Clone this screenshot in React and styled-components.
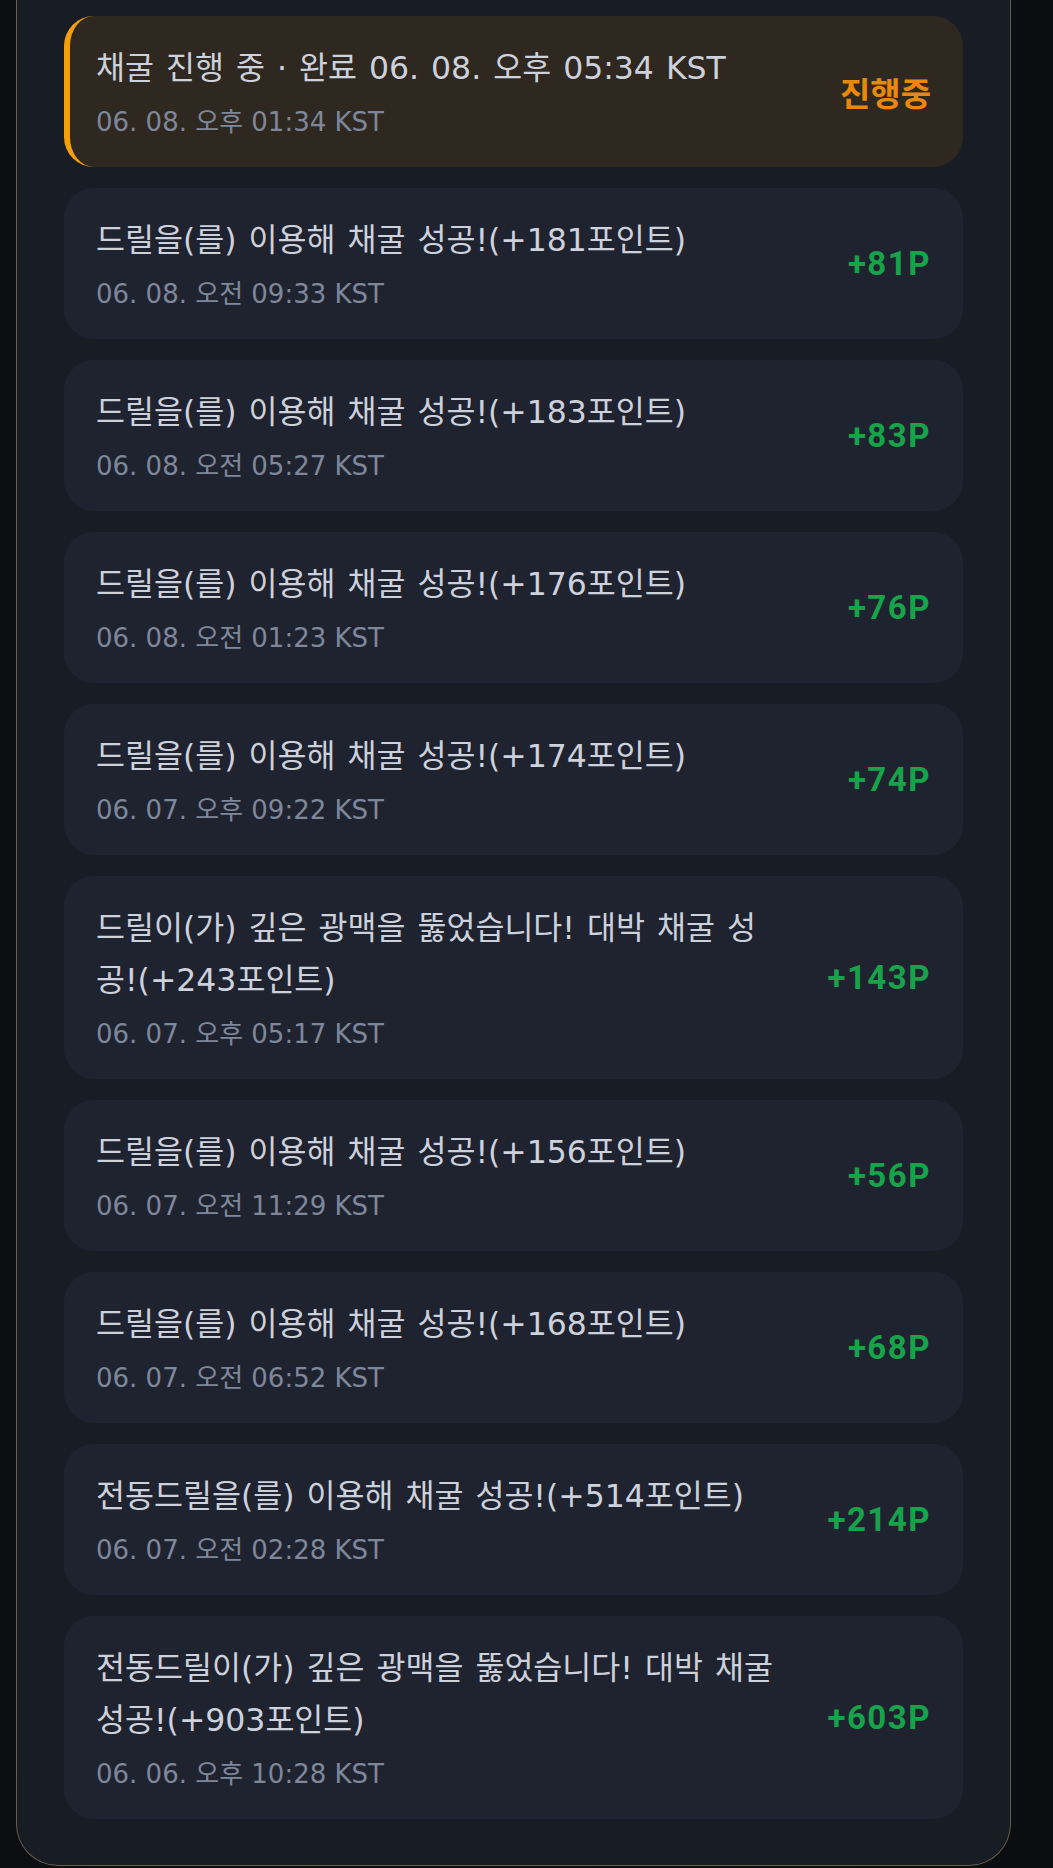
import React from 'react';
import styled, { createGlobalStyle } from 'styled-components';

const GlobalStyle = createGlobalStyle`
  html, body {
    margin: 0;
    padding: 0;
    background: #0c0e12;
  }
  body {
    font-family: "DejaVu Sans", "Noto Sans CJK KR", sans-serif;
  }
`;

const Page = styled.div`
  min-height: 1868px;
  background: linear-gradient(90deg, #0c0e12 0%, #0f1116 50%, #0b0d10 100%);
  padding-left: 16px;
`;

const Panel = styled.div`
  width: 995px;
  box-sizing: border-box;
  background: #181c25;
  border: 1.5px solid rgba(176, 148, 96, 0.55);
  border-top: none;
  border-radius: 0 0 42px 42px;
  padding: 16px 47px 46px;
  display: flex;
  flex-direction: column;
  gap: 21px;
`;

const Card = styled.div`
  display: flex;
  align-items: center;
  justify-content: space-between;
  gap: 24px;
  box-sizing: border-box;
  border-radius: 30px;
  padding: 26px 32px 26px ${p => (p.$active ? '26px' : '32px')};
  background: ${p => (p.$active ? '#2e2820' : '#1f2330')};
  border-left: ${p => (p.$active ? '6px solid #f59e0b' : 'none')};
`;

const Body = styled.div`
  display: flex;
  flex-direction: column;
  max-width: 688px;
`;

const Title = styled.div`
  font-size: 31.5px;
  line-height: 52px;
  word-spacing: 2px;
  color: #cdd1db;
`;

const Time = styled.div`
  margin-top: 10px;
  font-size: 26px;
  line-height: 37px;
  color: #7f879a;
`;

const Amount = styled.div`
  flex-shrink: 0;
  font-family: Roboto, "Noto Sans CJK KR", sans-serif;
  font-size: 33px;
  font-weight: 700;
  letter-spacing: ${p => (p.$pending ? '0' : '1.5px')};
  color: ${p => (p.$pending ? '#e8890c' : '#17a34a')};
`;

const logs = [
  { title: '드릴을(를) 이용해 채굴 성공!(+181포인트)', time: '06. 08. 오전 09:33 KST', amount: '+81P' },
  { title: '드릴을(를) 이용해 채굴 성공!(+183포인트)', time: '06. 08. 오전 05:27 KST', amount: '+83P' },
  { title: '드릴을(를) 이용해 채굴 성공!(+176포인트)', time: '06. 08. 오전 01:23 KST', amount: '+76P' },
  { title: '드릴을(를) 이용해 채굴 성공!(+174포인트)', time: '06. 07. 오후 09:22 KST', amount: '+74P' },
  { title: '드릴이(가) 깊은 광맥을 뚫었습니다! 대박 채굴 성공!(+243포인트)', time: '06. 07. 오후 05:17 KST', amount: '+143P' },
  { title: '드릴을(를) 이용해 채굴 성공!(+156포인트)', time: '06. 07. 오전 11:29 KST', amount: '+56P' },
  { title: '드릴을(를) 이용해 채굴 성공!(+168포인트)', time: '06. 07. 오전 06:52 KST', amount: '+68P' },
  { title: '전동드릴을(를) 이용해 채굴 성공!(+514포인트)', time: '06. 07. 오전 02:28 KST', amount: '+214P' },
  { title: '전동드릴이(가) 깊은 광맥을 뚫었습니다! 대박 채굴 성공!(+903포인트)', time: '06. 06. 오후 10:28 KST', amount: '+603P' },
];

export default function App() {
  return (
    <>
      <GlobalStyle />
      <Page>
        <Panel>
          {/* 진행 중인 채굴 */}
          <Card $active>
            <Body>
              <Title>채굴 진행 중 · 완료 06. 08. 오후 05:34 KST</Title>
              <Time>06. 08. 오후 01:34 KST</Time>
            </Body>
            <Amount $pending>진행중</Amount>
          </Card>

          {logs.map(item => (
            <Card key={item.time}>
              <Body>
                <Title>{item.title}</Title>
                <Time>{item.time}</Time>
              </Body>
              <Amount>{item.amount}</Amount>
            </Card>
          ))}
        </Panel>
      </Page>
    </>
  );
}
